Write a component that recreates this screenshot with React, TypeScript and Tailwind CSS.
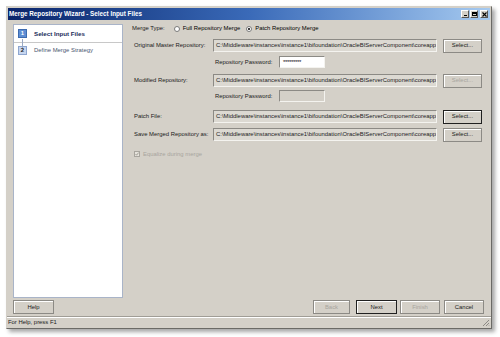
import React from "react";

const PATH = "C:\\Middleware\\instances\\instance1\\bifoundation\\OracleBIServerComponent\\coreapplic";

function Btn({
  children,
  disabled,
  primary,
  className = "",
}: {
  children: React.ReactNode;
  disabled?: boolean;
  primary?: boolean;
  className?: string;
}) {
  return (
    <div
      className={`flex items-center justify-center h-[14px] bg-[#d4d0c8] border ${
        primary ? "border-[#202020]" : "border-[#8c8a85]"
      } shadow-[inset_1px_1px_0_#ffffff] ${disabled ? "text-[#a8a59e]" : "text-[#1a1a1a]"} ${className}`}
    >
      {children}
    </div>
  );
}

function PathRow({ label, disabled, primary }: { label: string; disabled?: boolean; primary?: boolean }) {
  return (
    <div className="flex items-center h-[13px]">
      <div className="w-[81px] pl-[2px] text-[#1a1a1a]">{label}</div>
      <div className="w-[224px] h-[13px] border border-[#8c8a85] border-b-[#f4f3ef] border-r-[#f4f3ef] bg-[#dcd9d2] overflow-hidden whitespace-nowrap pl-[2px] leading-[11px] text-[#222]">
        {PATH}
      </div>
      <Btn disabled={disabled} primary={primary} className="ml-[6px] w-[39px]">
        Select...
      </Btn>
    </div>
  );
}

function PwRow({ enabled }: { enabled?: boolean }) {
  return (
    <div className="flex items-center h-[12px] pl-[83px]">
      <div className="w-[64px] text-[#1a1a1a]">Repository Password:</div>
      <div
        className={`w-[46px] h-[12px] border border-[#8c8a85] border-b-[#f4f3ef] border-r-[#f4f3ef] ${
          enabled ? "bg-white" : "bg-[#d4d0c8]"
        } leading-[10px] pl-[3px] text-[#111] tracking-[-0.3px]`}
      >
        {enabled ? "*********" : ""}
      </div>
    </div>
  );
}

export default function App() {
  return (
    <div
      className="w-[500px] h-[337px] bg-white pt-[6px] pl-[6px] text-[5.9px]"
      style={{ fontFamily: '"Liberation Sans", Arial, sans-serif' }}
    >
      <div className="w-[486px] h-[323px] flex flex-col border border-[#6b6a66] border-t-[#d4d0c8] border-l-[#d4d0c8] bg-[#d4d0c8] shadow-[3px_3px_4px_rgba(0,0,0,0.35)]">
        {/* title bar */}
        <div className="mx-[1px] mt-[1px] h-[12px] flex items-center justify-between bg-gradient-to-r from-[#0a246a] via-[#3a6ab8] to-[#a6caf0] pl-[1px] pr-[2px]">
          <span className="text-white font-bold text-[6.3px]">Merge Repository Wizard - Select Input Files</span>
          <div className="flex items-center gap-[1px]">
            <div className="w-[8px] h-[8px] bg-[#d4d0c8] border border-[#555] border-t-white border-l-white flex items-end justify-center pb-[1px]">
              <div className="w-[3px] h-[1px] bg-black" />
            </div>
            <div className="w-[8px] h-[8px] bg-[#d4d0c8] border border-[#555] border-t-white border-l-white flex items-center justify-center">
              <div className="w-[5px] h-[4px] border border-black border-t-2" />
            </div>
            <div className="ml-[1px] w-[8px] h-[8px] bg-[#d4d0c8] border border-[#555] border-t-white border-l-white flex items-center justify-center">
              <svg width="5" height="5" viewBox="0 0 5 5">
                <path d="M0.5 0.5 L4.5 4.5 M4.5 0.5 L0.5 4.5" stroke="#000" strokeWidth="1.1" />
              </svg>
            </div>
          </div>
        </div>

        {/* body */}
        <div className="flex flex-1 pl-[6px] pt-[4px] pr-[7px]">
          {/* left steps panel */}
          <div className="w-[110px] h-[274px] bg-white border border-[#a9b4c8] flex flex-col">
            <div className="relative flex items-center h-[18px] border-b border-[#c8c8c8] pl-[4px]">
              <div className="w-[9px] h-[9px] bg-[#5d8ed4] border border-[#3d6bb0] text-white flex items-center justify-center font-bold">
                1
              </div>
              <span className="ml-[7px] font-bold text-[#1b2c5a] text-[6.2px]">Select Input Files</span>
              <div className="absolute left-[8px] top-[14px] w-[1px] h-[9px] bg-[#9aa9c4]" />
            </div>
            <div className="flex items-center h-[14px] pl-[4px]">
              <div className="w-[9px] h-[9px] bg-[#c7d6ef] border border-[#8ea6d0] text-[#222] flex items-center justify-center font-bold">
                2
              </div>
              <span className="ml-[7px] text-[#4a5670]">Define Merge Strategy</span>
            </div>
          </div>

          {/* right form */}
          <div className="flex-1 pl-[9px] flex flex-col">
            <div className="flex items-center h-[7px] mt-[1px]">
              <span className="text-[#1a1a1a]">Merge Type:</span>
              <div className="ml-[9px] flex items-center">
                <div className="w-[6px] h-[6px] rounded-full bg-white border border-[#7a7a7a]" />
                <span className="ml-[3px]">Full Repository Merge</span>
              </div>
              <div className="ml-[6px] flex items-center">
                <div className="w-[6px] h-[6px] rounded-full bg-white border border-[#7a7a7a] flex items-center justify-center">
                  <div className="w-[2px] h-[2px] rounded-full bg-black" />
                </div>
                <span className="ml-[3px]">Patch Repository Merge</span>
              </div>
            </div>

            <div className="mt-[7px]">
              <PathRow label="Original Master Repository:" />
            </div>
            <div className="mt-[4px]">
              <PwRow enabled />
            </div>
            <div className="mt-[6px]">
              <PathRow label="Modified Repository:" disabled />
            </div>
            <div className="mt-[3px]">
              <PwRow />
            </div>
            <div className="mt-[8px]">
              <PathRow label="Patch File:" primary />
            </div>
            <div className="mt-[5px]">
              <PathRow label="Save Merged Repository as:" />
            </div>
            <div className="mt-[9px] flex items-center pl-[2px] text-[#a8a59e]">
              <div className="w-[6px] h-[6px] border border-[#a8a59e] bg-[#e6e3dc] flex items-center justify-center">
                <svg width="4" height="4" viewBox="0 0 4 4">
                  <path d="M0.5 2 L1.6 3.2 L3.6 0.6" stroke="#9a978f" strokeWidth="0.9" fill="none" />
                </svg>
              </div>
              <span className="ml-[3px]">Equalize during merge</span>
            </div>
          </div>
        </div>

        {/* buttons row */}
        <div className="flex items-center h-[14px] pl-[6px] pr-[7px] mb-[2px]">
          <Btn className="w-[41px]">Help</Btn>
          <div className="flex-1" />
          <Btn disabled className="w-[37px]">
            Back
          </Btn>
          <Btn primary className="ml-[6px] w-[41px]">
            Next
          </Btn>
          <Btn disabled className="ml-[3px] w-[40px]">
            Finish
          </Btn>
          <Btn className="ml-[4px] w-[40px]">Cancel</Btn>
        </div>

        {/* status bar */}
        <div className="relative h-[12px] border-t border-[#a09d96] shadow-[inset_0_1px_0_#ffffff] flex items-center pl-[1px] text-[#1a1a1a]">
          For Help, press F1
          <svg className="absolute right-[1px] bottom-[1px]" width="8" height="8" viewBox="0 0 8 8">
            <path d="M7 1 L1 7 M7 4 L4 7 M7 6.5 L6.5 7" stroke="#8c8a85" strokeWidth="1" />
          </svg>
        </div>
      </div>
    </div>
  );
}
